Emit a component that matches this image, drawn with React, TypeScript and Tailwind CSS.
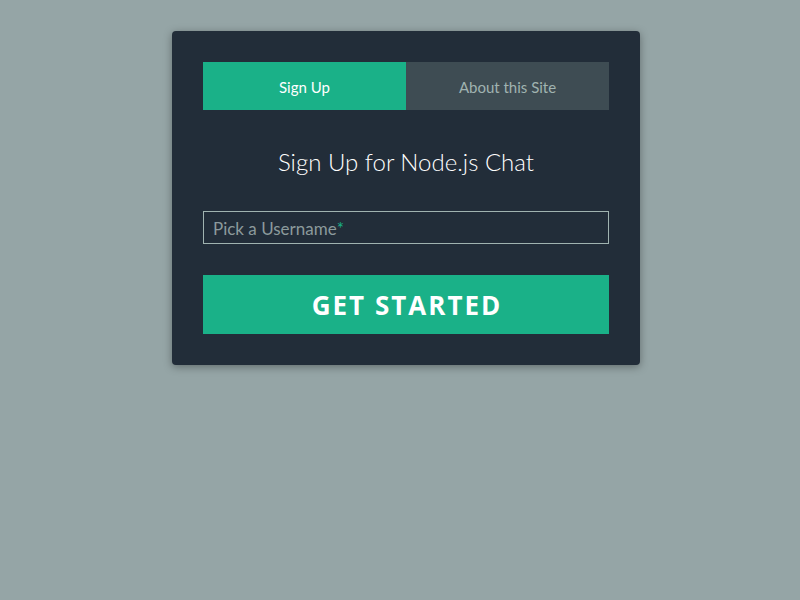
import React from "react";

export default function App() {
  return (
    <div className="min-h-[600px] w-full bg-[#95a5a6] pl-[12px] pt-[31px]" style={{ fontFamily: "Lato, 'Noto Sans', sans-serif" }}>
      <div className="mx-auto w-[468px] rounded-[4px] bg-[#222d39] p-[31px] shadow-[0_2px_8px_rgba(0,0,0,0.35)]">
        <div className="flex h-[48px]">
          <div className="flex flex-1 items-center justify-center pt-[2px] bg-[#1ab188] text-[15px] text-white">Sign Up</div>
          <div className="flex flex-1 items-center justify-center pt-[2px] bg-[#3e4c53] text-[15px] text-[#a0b3b0]">About this Site</div>
        </div>
        <h1 className="mt-[36px] text-center text-[24px] font-light leading-[32px] text-white">Sign Up for Node.js Chat</h1>
        <div className="mt-[33px] flex h-[33px] items-center border border-[#a0b3b0] px-[9px] pt-[2px] text-[17px] text-[#8c9a9c]">
          Pick a Username<span className="text-[#1ab188]">*</span>
        </div>
        <button className="mt-[31px] flex h-[59px] w-full items-center justify-center bg-[#1ab188] pl-[2px] pt-[2px] text-[26px] font-bold tracking-[2px] text-white" style={{ fontFamily: "'Open Sans', sans-serif" }}>
          GET STARTED
        </button>
      </div>
    </div>
  );
}
